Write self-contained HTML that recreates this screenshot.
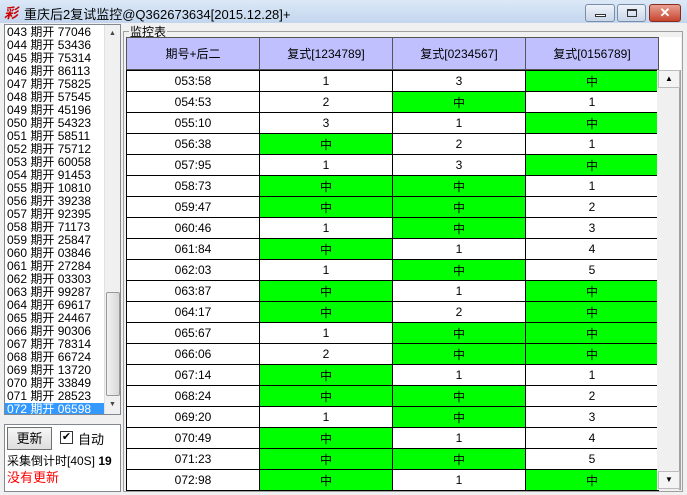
<!DOCTYPE html>
<html><head><meta charset="utf-8"><style>
*{margin:0;padding:0;box-sizing:border-box}
body{width:687px;height:495px;overflow:hidden;background:#f0f0f0;font-family:"Liberation Sans","Noto Sans CJK SC",sans-serif;font-size:12px;position:relative}
.abs{position:absolute}
#title{left:0;top:0;width:687px;height:23px;background:linear-gradient(#dbe8f7,#c4d6ee);}
#title .t{left:24px;top:4px;font-size:13px;color:#000}
.wb{top:4px;height:18px;border:1px solid #7a8ca8;border-radius:3px;background:linear-gradient(#eef3fa,#c9d6e8)}
#list{left:4px;top:24px;width:117px;height:391px;background:#fff;border:1px solid #828790;overflow:hidden}
#list div{height:13px;line-height:13px;font-size:12px;padding-left:2px;white-space:nowrap}
#list .sel{background:#3399ff;color:#fff;width:99px}
#sb1{left:104px;top:25px;width:16px;height:389px;background:#f0f0f0;border-left:1px solid #e0e0e0}
#panel{left:4px;top:424px;width:117px;height:68px;border:1px solid #828790;background:#fff}
#grp{left:123px;top:31px;width:560px;height:461px;border:1px solid #a0a0a0}
table{border-collapse:collapse;table-layout:fixed}
td{border:1px solid #000;height:21px;text-align:center;font-size:12px;width:133px;background:#fff;padding:0}
td.g{background:#00ff00}
#hdr td{background:#c0c0ff;height:32px;border-color:#555}
</style></head><body>
<div id="title" class="abs">
<div class="abs" style="left:4px;top:3px;color:#c00;font-weight:bold;font-size:14px;font-style:italic">彩</div>
<div class="abs t">重庆后2复试监控@Q362673634[2015.12.28]+</div>
<div class="abs wb" style="left:585px;width:30px"><div class="abs" style="left:9px;top:9px;width:11px;height:3px;border:1px solid #333;background:#fff"></div></div>
<div class="abs wb" style="left:617px;width:29px"><div class="abs" style="left:9px;top:4px;width:10px;height:8px;border:1px solid #333;border-top-width:2px"></div></div>
<div class="abs wb" style="left:649px;width:32px;background:linear-gradient(#e8a093,#c6452e);border-color:#8a2a1c;color:#fff;text-align:center;font-weight:bold;font-size:13px;line-height:16px">✕</div>
</div>
<div id="list" class="abs">
<div style="height:1px"></div>
<div>043 期开 77046</div><div>044 期开 53436</div><div>045 期开 75314</div><div>046 期开 86113</div><div>047 期开 75825</div><div>048 期开 57545</div><div>049 期开 45196</div><div>050 期开 54323</div><div>051 期开 58511</div><div>052 期开 75712</div><div>053 期开 60058</div><div>054 期开 91453</div><div>055 期开 10810</div><div>056 期开 39238</div><div>057 期开 92395</div><div>058 期开 71173</div><div>059 期开 25847</div><div>060 期开 03846</div><div>061 期开 27284</div><div>062 期开 03303</div><div>063 期开 99287</div><div>064 期开 69617</div><div>065 期开 24467</div><div>066 期开 90306</div><div>067 期开 78314</div><div>068 期开 66724</div><div>069 期开 13720</div><div>070 期开 33849</div><div>071 期开 28523</div><div class="sel">072 期开 06598</div>
</div>
<div id="sb1" class="abs">
<div class="abs" style="left:4px;top:5px;font-size:7px;color:#444">▲</div>
<div class="abs" style="left:1px;top:267px;width:14px;height:104px;border:1px solid #999;border-radius:2px;background:linear-gradient(90deg,#f2f2f2,#d8d8d8)"></div>
<div class="abs" style="left:4px;top:376px;font-size:7px;color:#444">▼</div>
</div>
<div id="panel" class="abs">
<div class="abs" style="left:2px;top:2px;width:45px;height:23px;border:1px solid #707070;background:linear-gradient(#f6f6f6,#dddddd);text-align:center;line-height:21px;font-size:13px">更新</div>
<div class="abs" style="left:55px;top:6px;width:13px;height:13px;border:1px solid #333;background:#fff;font-size:11px;line-height:11px;text-align:center">✔</div>
<div class="abs" style="left:73px;top:4px;font-size:13px">自动</div>
<div class="abs" style="left:2px;top:27px;font-size:12px">采集倒计时[40S] <b>19</b></div>
<div class="abs" style="left:2px;top:42px;font-size:13px;color:#f00">没有更新</div>
</div>
<div id="grp" class="abs"></div>
<div class="abs" style="left:129px;top:23px;background:#f0f0f0;padding:0 1px;font-size:12px">监控表</div>
<div class="abs" style="left:126px;top:37px;width:555px;height:452px;background:#fff"></div>
<table id="hdr" class="abs" style="left:126px;top:37px"><tr><td>期号+后二</td><td>复式[1234789]</td><td>复式[0234567]</td><td>复式[0156789]</td></tr></table>
<table class="abs" style="left:126px;top:70px">
<tr><td>053:58</td><td>1</td><td>3</td><td class="g">中</td></tr>
<tr><td>054:53</td><td>2</td><td class="g">中</td><td>1</td></tr>
<tr><td>055:10</td><td>3</td><td>1</td><td class="g">中</td></tr>
<tr><td>056:38</td><td class="g">中</td><td>2</td><td>1</td></tr>
<tr><td>057:95</td><td>1</td><td>3</td><td class="g">中</td></tr>
<tr><td>058:73</td><td class="g">中</td><td class="g">中</td><td>1</td></tr>
<tr><td>059:47</td><td class="g">中</td><td class="g">中</td><td>2</td></tr>
<tr><td>060:46</td><td>1</td><td class="g">中</td><td>3</td></tr>
<tr><td>061:84</td><td class="g">中</td><td>1</td><td>4</td></tr>
<tr><td>062:03</td><td>1</td><td class="g">中</td><td>5</td></tr>
<tr><td>063:87</td><td class="g">中</td><td>1</td><td class="g">中</td></tr>
<tr><td>064:17</td><td class="g">中</td><td>2</td><td class="g">中</td></tr>
<tr><td>065:67</td><td>1</td><td class="g">中</td><td class="g">中</td></tr>
<tr><td>066:06</td><td>2</td><td class="g">中</td><td class="g">中</td></tr>
<tr><td>067:14</td><td class="g">中</td><td>1</td><td>1</td></tr>
<tr><td>068:24</td><td class="g">中</td><td class="g">中</td><td>2</td></tr>
<tr><td>069:20</td><td>1</td><td class="g">中</td><td>3</td></tr>
<tr><td>070:49</td><td class="g">中</td><td>1</td><td>4</td></tr>
<tr><td>071:23</td><td class="g">中</td><td class="g">中</td><td>5</td></tr>
<tr><td>072:98</td><td class="g">中</td><td>1</td><td class="g">中</td></tr>
</table>
<div class="abs" style="left:657px;top:70px;width:24px;height:420px;background:#f0f0f0;border-right:2px solid #a0a0a0">
<div class="abs" style="left:1px;top:0;width:22px;height:18px;border:1px solid #bbb;background:#f4f4f4;text-align:center;font-size:8px;line-height:16px">▲</div>
<div class="abs" style="left:1px;top:401px;width:22px;height:18px;border:1px solid #bbb;background:#f4f4f4;text-align:center;font-size:8px;line-height:16px">▼</div>
</div>
</body></html>
